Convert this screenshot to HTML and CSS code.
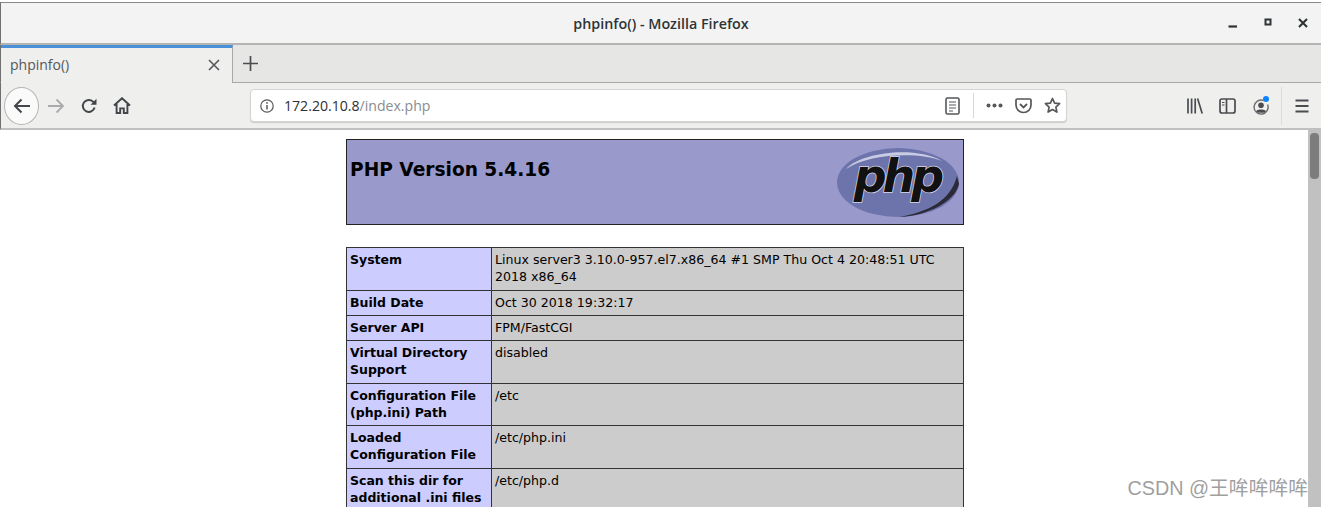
FILE: index.html
```html
<!DOCTYPE html>
<html lang="en">
<head>
    <meta charset="UTF-8">
    <meta name="viewport" content="width=device-width, initial-scale=1.0">
    <title>phpinfo()</title>
    <link rel="stylesheet" href="styles.css">
</head>
<body>
    <div class="window">
        <div class="titlebar">
            <span class="window-title">phpinfo() - Mozilla Firefox</span>
            <div class="window-controls">
                <svg width="10" height="10" viewBox="0 0 10 10"><rect x="0.5" y="7.4" width="8.5" height="2.2" fill="#2e3436"/></svg>
                <svg width="10" height="10" viewBox="0 0 10 10"><rect x="2.5" y="1.5" width="5" height="5" fill="none" stroke="#2e3436" stroke-width="2"/></svg>
                <svg width="10" height="10" viewBox="0 0 10 10"><path d="M1 1l8 8M9 1l-8 8" stroke="#2e3436" stroke-width="2.1" fill="none"/></svg>
            </div>
        </div>

        <div class="tabbar">
            <div class="tab">
                <span class="tab-label">phpinfo()</span>
                <svg width="12" height="12" viewBox="0 0 12 12"><path d="M1 1l10 10M11 1L1 11" stroke="#55575a" stroke-width="1.6" fill="none"/></svg>
            </div>
            <button class="new-tab">
                <svg width="15" height="15" viewBox="0 0 15 15"><path d="M7.5 0v15M0 7.5h15" stroke="#4a4c50" stroke-width="1.7" fill="none"/></svg>
            </button>
        </div>

        <div class="toolbar">
            <div class="nav-buttons">
                <div class="back-button">
                    <svg width="18" height="16" viewBox="0 0 18 16"><path d="M17 8H2M8.5 1.5L2 8l6.5 6.5" stroke="#43464a" stroke-width="2" fill="none"/></svg>
                </div>
                <svg class="forward-icon" width="18" height="16" viewBox="0 0 18 16"><path d="M1 8h15M9.5 1.5L16 8l-6.5 6.5" stroke="#a9abad" stroke-width="1.8" fill="none"/></svg>
                <svg class="reload-icon" width="16" height="16" viewBox="0 0 16 16"><path d="M13.6 9.5A6 6 0 1 1 12 3.6L14 5.5" stroke="#43464a" stroke-width="2" fill="none"/><path d="M15.5 0.8v6h-6z" fill="#43464a"/></svg>
                <svg class="home-icon" width="18" height="17" viewBox="0 0 18 17"><path d="M1 8.5L9 1.2l8 7.3M3.6 7v9h3.6v-4.6h3.6V16h3.6V7" stroke="#43464a" stroke-width="1.9" fill="none"/></svg>
            </div>

            <div class="urlbar">
                <svg class="info-icon" width="14" height="14" viewBox="0 0 14 14"><circle cx="7" cy="7" r="6.2" stroke="#55575a" stroke-width="1.2" fill="none"/><path d="M7 6v4.4" stroke="#55575a" stroke-width="1.5"/><circle cx="7" cy="3.9" r="0.9" fill="#55575a"/></svg>
                <span class="url"><span class="url-host">172.20.10.8</span>/index.php</span>
                <svg class="reader-icon" width="15" height="18" viewBox="0 0 15 18"><rect x="1" y="1" width="13" height="16" rx="1.5" stroke="#55575a" stroke-width="1.6" fill="none"/><path d="M4 5h7M4 8h7M4 11h7M4 14h4" stroke="#55575a" stroke-width="1.2"/></svg>
                <span class="url-divider"></span>
                <svg class="dots-icon" width="17" height="5" viewBox="0 0 17 5"><circle cx="2.5" cy="2.5" r="2" fill="#55575a"/><circle cx="8.5" cy="2.5" r="2" fill="#55575a"/><circle cx="14.5" cy="2.5" r="2" fill="#55575a"/></svg>
                <svg class="pocket-icon" width="17" height="16" viewBox="0 0 17 16"><path d="M1 2.2C1 1.5 1.5 1 2.2 1h12.6c.7 0 1.2.5 1.2 1.2V7a7.5 7.5 0 0 1-15 0z" stroke="#55575a" stroke-width="1.7" fill="none"/><path d="M5 6l3.5 3.4L12 6" stroke="#55575a" stroke-width="1.8" fill="none"/></svg>
                <svg class="star-icon" width="17" height="17" viewBox="0 0 17 17"><path d="M8.5 1.5l2.1 4.6 5 .6-3.7 3.4 1 5-4.4-2.5-4.4 2.5 1-5L1.4 6.7l5-.6z" stroke="#55575a" stroke-width="1.7" fill="none" stroke-linejoin="round"/></svg>
            </div>

            <div class="toolbar-right">
                <svg width="16" height="16" viewBox="0 0 16 16"><path d="M1 0.5v15M4.6 0.5v15M8.2 0.5v15M10.6 0.5l4.6 15" stroke="#4a4c50" stroke-width="1.7" fill="none"/></svg>
                <svg width="17" height="16" viewBox="0 0 17 16"><rect x="1" y="1" width="15" height="14" rx="2" stroke="#4a4c50" stroke-width="1.7" fill="none"/><path d="M7.5 1v14" stroke="#4a4c50" stroke-width="1.7"/><path d="M3 4.5h2.5M3 7h2.5" stroke="#4a4c50" stroke-width="1.1"/></svg>
                <div class="account">
                    <svg width="16" height="16" viewBox="0 0 16 16"><path d="M10.5 1.5A7 7 0 1 0 14.6 5.5" stroke="#6a6c70" stroke-width="1.4" fill="none"/><circle cx="8" cy="6.2" r="2.8" fill="#4a4c50"/><path d="M3 12.2c1.2-2.4 8.8-2.4 10 0-2.6 2.2-7.4 2.2-10 0z" fill="#4a4c50"/></svg>
                    <span class="account-dot"></span>
                </div>
                <span class="toolbar-divider"></span>
                <svg width="14" height="14" viewBox="0 0 14 14"><path d="M0.5 1.5h13M0.5 7h13M0.5 12.5h13" stroke="#4a4c50" stroke-width="1.8" fill="none"/></svg>
            </div>
        </div>

        <div class="content">
            <div class="page">
                <div class="phpinfo">
                    <div class="php-header">
                        <h1>PHP Version 5.4.16</h1>
                        <svg class="php-logo" width="124" height="72" viewBox="0 0 124 72">
                            <ellipse cx="63" cy="36.5" rx="61" ry="34.5" fill="#6d74ab"/>
                            <path d="M11 23C25 7 79 -1 107 15C85 6 35 7 11 23z" fill="#c9cbe2"/>
                            <path d="M124 38C120 56 92 70 64 71C94 66 116 54 122 30z" fill="#2b2b38"/>
                            <text class="php-logo-text" x="62" y="46" text-anchor="middle">php</text>
                        </svg>
                    </div>

                    <table class="info-table">
                        <tr><td class="info-key">System</td><td class="info-value">Linux server3 3.10.0-957.el7.x86_64 #1 SMP Thu Oct 4 20:48:51 UTC 2018 x86_64</td></tr>
                        <tr><td class="info-key">Build Date</td><td class="info-value">Oct 30 2018 19:32:17</td></tr>
                        <tr><td class="info-key">Server API</td><td class="info-value">FPM/FastCGI</td></tr>
                        <tr><td class="info-key">Virtual Directory Support</td><td class="info-value">disabled</td></tr>
                        <tr><td class="info-key">Configuration File (php.ini) Path</td><td class="info-value">/etc</td></tr>
                        <tr><td class="info-key">Loaded Configuration File</td><td class="info-value">/etc/php.ini</td></tr>
                        <tr><td class="info-key">Scan this dir for additional .ini files</td><td class="info-value">/etc/php.d</td></tr>
                    </table>
                </div>
            </div>
            <div class="scrollbar"><div class="scrollbar-thumb"></div></div>
        </div>
    </div>

    <div class="watermark">CSDN @王哞哞哞哞</div>
</body>
</html>
```

FILE: styles.css
```css
* {
    margin: 0;
    padding: 0;
    box-sizing: border-box;
}

html, body {
    height: 100%;
    overflow: hidden;
}

body {
    background-color: #ffffff;
    font-family: "Open Sans", "Noto Sans", sans-serif;
    position: relative;
}

.window {
    height: 100%;
    display: flex;
    flex-direction: column;
    padding-top: 2px;
    padding-right: 3px;
}

.titlebar {
    height: 43px;
    flex-shrink: 0;
    background-color: #f3f3f3;
    border-top: 1px solid #8a8885;
    border-left: 1px solid #6f6f6f;
    border-bottom: 2px solid #b4b4b2;
    display: flex;
    align-items: center;
    justify-content: center;
    position: relative;
}

.window-title {
    font-size: 14.3px;
    font-weight: 600;
    color: #2e3436;
}

.window-controls {
    position: absolute;
    right: 13px;
    top: 15px;
    display: flex;
    gap: 25px;
}

.tabbar {
    height: 38px;
    flex-shrink: 0;
    background-color: #e6e6e5;
    border-left: 1px solid #6f6f6f;
    border-bottom: 1px solid #a8a8a6;
    display: flex;
}

.tab {
    width: 232px;
    height: 38px;
    background-color: #efefee;
    border-top: 3px solid #4a90d9;
    border-right: 1px solid #a8a8a6;
    padding: 0 12px 2px 9px;
    display: flex;
    align-items: center;
    justify-content: space-between;
}

.tab-label {
    font-size: 14px;
    color: #55575a;
}

.new-tab {
    width: 34px;
    border: none;
    background: none;
    display: flex;
    align-items: center;
    justify-content: center;
    padding-bottom: 1px;
}

.toolbar {
    height: 47px;
    flex-shrink: 0;
    background-color: #efefee;
    border-left: 1px solid #6f6f6f;
    border-bottom: 2px solid #c0c0be;
    display: flex;
    align-items: center;
    padding-left: 3px;
}

.nav-buttons {
    width: 246px;
    flex-shrink: 0;
    display: flex;
    align-items: center;
}

.back-button {
    width: 35px;
    height: 38px;
    background-color: #fafafa;
    border: 1px solid #b4b4b2;
    border-radius: 50%;
    display: flex;
    align-items: center;
    justify-content: center;
}

.forward-icon {
    margin-left: 8px;
}

.reload-icon {
    margin-left: 16px;
}

.home-icon {
    margin-left: 16px;
}

.urlbar {
    width: 817px;
    height: 33px;
    flex-shrink: 0;
    background-color: #ffffff;
    border: 1px solid #d4d4d2;
    border-radius: 4px;
    box-shadow: 0 1px 1px rgba(0, 0, 0, 0.15);
    display: flex;
    align-items: center;
    padding: 0 5px 0 9px;
}

.url {
    font-size: 14.1px;
    color: #8a8c8f;
    margin-left: 10px;
    flex: 1;
}

.url-host {
    color: #2e3033;
}

.url-divider {
    width: 1px;
    height: 25px;
    background-color: #d8d8d8;
    margin: 0 12px 0 13px;
}

.pocket-icon {
    margin-left: 12px;
}

.star-icon {
    margin-left: 12px;
}

.toolbar-right {
    flex: 1;
    display: flex;
    align-items: center;
    padding-left: 120px;
}

.toolbar-right > svg:nth-child(2) {
    margin-left: 16px;
}

.account {
    position: relative;
    height: 16px;
    margin-left: 17px;
}

.account-dot {
    position: absolute;
    top: -2px;
    right: 0;
    width: 6px;
    height: 6px;
    border-radius: 50%;
    background-color: #0a84ff;
}

.toolbar-divider {
    width: 1px;
    height: 38px;
    background-color: #dcdcda;
    margin: 0 13px 0 12px;
}

.content {
    flex: 1;
    min-height: 0;
    display: flex;
}

.page {
    flex: 1;
    overflow: hidden;
    padding: 9px 0 0 346px;
}

.phpinfo {
    width: 618px;
}

.php-header {
    height: 86px;
    background-color: #9999cc;
    border: 1px solid #222222;
    padding: 0 4px 0 3px;
    display: flex;
    justify-content: space-between;
    align-items: center;
}

.php-header h1 {
    font-family: "DejaVu Sans", sans-serif;
    font-size: 18.6px;
    font-weight: 700;
    color: #000000;
    align-self: flex-start;
    margin-top: 19px;
}

.php-logo-text {
    font-family: "DejaVu Sans", sans-serif;
    font-size: 46px;
    font-weight: 700;
    font-style: italic;
    letter-spacing: -4px;
    fill: #111111;
    stroke: #d8d8ea;
    stroke-width: 1.5px;
    paint-order: stroke;
}

.info-table {
    width: 618px;
    margin-top: 22px;
    border-collapse: collapse;
    table-layout: fixed;
    font-family: "DejaVu Sans", sans-serif;
    font-size: 12.6px;
    line-height: 17.25px;
    color: #000000;
}

.info-table td {
    border: 1px solid #333333;
    padding: 3px 3px 4px;
    vertical-align: top;
}

.info-key {
    width: 145px;
    background-color: #ccccff;
    font-size: 12.5px;
    font-weight: 700;
}

.info-value {
    background-color: #cccccc;
}

.scrollbar {
    width: 13px;
    flex-shrink: 0;
    background-color: #c1c1c1;
    padding: 3px 2px 0;
}

.scrollbar-thumb {
    height: 46px;
    background-color: #7d7d7d;
    border-radius: 4px;
}

.watermark {
    position: absolute;
    right: 16px;
    bottom: 6px;
    font-family: "Liberation Sans", "Noto Sans CJK SC", sans-serif;
    font-size: 19.8px;
    color: #8f8f8f;
    opacity: 0.85;
}
```
